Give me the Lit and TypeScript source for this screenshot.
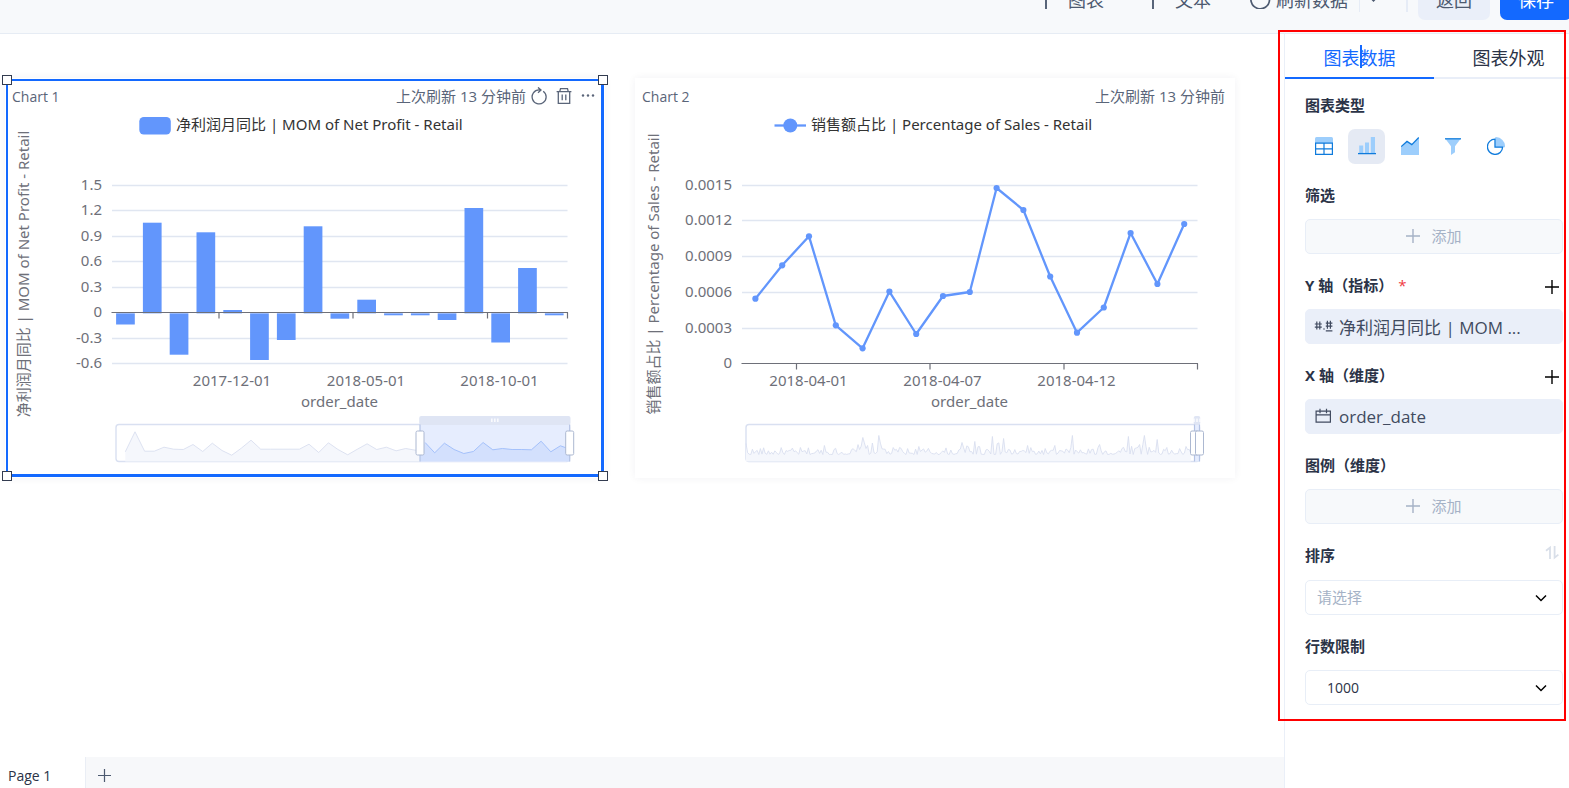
import { LitElement, html, svg, css } from "lit";
import { customElement, property } from "lit/decorators.js";

const BAND = 26.8;
const LEFT = 107;
const RIGHT = 562.5;
const SLIDER_BASE = 383.5;

interface ChartSpec {
  kind: "bar" | "line";
  title: string;
  legend: string;
  axisLabels: string[];
  gridTop: number;
  gridStep: number;
  zeroRow: number;
  ticks: number[];
  dates: [number, string][];
  /** y coordinate of each value's end on the plot */
  values: number[];
  window: [number, number];
  overview: [number, number][];
}

const overviewOne: [number, number][] = [
  9.7, 29.7, 10.3, 10.3, 14.3, 12.3, 12, 17, 10, 18.3, 11, 6.3, 13.3, 21.3, 12.3, 12.3, 12.3, 12.3, 12.3,
  17.3, 9, 18.7, 12, 6.7, 12.3, 17.7, 12, 14.3, 10.7, 13, 11.3, 19, 8.7, 18.3, 12, 8, 10, 19, 11.7, 13, 12,
  12, 11.7, 20.3, 9.7, 15.7, 13.7,
].map((h, i) => [Math.min(120.3 + i * 9.67, 561), h] as [number, number]);

function buildDailyOverview(): [number, number][] {
  const peaks: Record<number, number> = { 0: 18, 78: 16, 116: 24, 121: 16, 133: 26, 154: 14, 172: 15, 216: 19, 229: 20, 246: 25, 257: 23, 282: 16, 309: 16, 326: 26, 353: 17, 382: 25, 393: 17, 398: 26, 411: 22, 440: 15 };
  const keys = Object.keys(peaks).map(Number);
  const points: [number, number][] = [];
  let seed = 17;
  for (let x = 0; x <= 446; x += 1.6) {
    seed = (seed * 1103515245 + 12345) % 2147483648;
    const r = seed / 2147483648;
    const busy = x > 110 && x < 140 || x > 220 && x < 262 || x > 370 && x < 420 ? 1.7 : 1;
    let h = 7 + r * r * 7 * busy;
    const key = keys.find((k) => Math.abs(k - x) < 0.8);
    if (key !== undefined) h = peaks[key];
    points.push([111 + x, h]);
  }
  return points;
}

const CHARTS: ChartSpec[] = [
  {
    kind: "bar",
    title: "Chart 1",
    legend: "净利润月同比 | MOM of Net Profit - Retail",
    axisLabels: ["1.5", "1.2", "0.9", "0.6", "0.3", "0", "-0.3", "-0.6"],
    gridTop: 107.5,
    gridStep: 25.57,
    zeroRow: 5,
    ticks: [214, 348, 482.5, 562.5],
    dates: [[227, "2017-12-01"], [361, "2018-05-01"], [494.5, "2018-10-01"]],
    values: [246.5, 144.7, 276.7, 154.3, 232, 282, 262, 148.3, 240.7, 221.7, 237.3, 237.3, 242, 130, 264.5, 190, 237.3],
    window: [415, 564.7],
    overview: overviewOne,
  },
  {
    kind: "line",
    title: "Chart 2",
    legend: "销售额占比 | Percentage of Sales - Retail",
    axisLabels: ["0.0015", "0.0012", "0.0009", "0.0006", "0.0003", "0"],
    gridTop: 107.5,
    gridStep: 35.75,
    zeroRow: 5,
    ticks: [161.5, 295, 429, 562.5],
    dates: [[173.5, "2018-04-01"], [307.5, "2018-04-07"], [441.5, "2018-04-12"]],
    values: [220.7, 187.3, 158.3, 247.3, 270.3, 213.6, 256, 218, 214, 110, 132, 198.5, 254.7, 229.5, 155, 206, 146],
    window: [559.5, 564.5],
    overview: buildDailyOverview(),
  },
];

const plusIcon = (size: number, width = 1.4) => html`<svg width=${size} height=${size} viewBox="0 0 14 14" fill="none" stroke="currentColor" stroke-width=${width} aria-hidden="true"><path d="M7 0v14M0 7h14" /></svg>`;
const chevron = html`<svg class="chevron" width="12" height="12" viewBox="0 0 12 12" fill="none" stroke="currentColor" stroke-width="1.5" aria-hidden="true"><path d="M1 3.5l5 5 5-5" /></svg>`;

@customElement("chart-card")
class ChartCard extends LitElement {
  @property({ attribute: false }) spec!: ChartSpec;
  @property({ type: Boolean }) selected = false;

  static styles = css`
    :host {
      display: block;
      min-width: 0;
    }
    .card {
      position: relative;
      display: flex;
      flex-direction: column;
      background: #fff;
      box-shadow: 0 0 8px rgba(30, 40, 60, 0.06);
    }
    .head {
      box-sizing: border-box;
      display: flex;
      align-items: center;
      height: 38px;
      padding: 0 10px 2px 7px;
      color: #5a6579;
      gap: 5px;
    }
    .title {
      margin: 0 auto 0 0;
      font-size: 14px;
      font-weight: 400;
    }
    .time {
      font-size: 15px;
      line-height: 18px;
    }
    .tools {
      display: flex;
      gap: 9px;
    }
    .tools button {
      display: flex;
      padding: 0;
      border: 0;
      background: none;
      color: inherit;
      cursor: pointer;
    }
    .plot {
      display: block;
      width: 100%;
      height: auto;
      font-family: "Noto Sans", "Noto Sans CJK SC", sans-serif;
      font-size: 15px;
    }
    .axis {
      fill: #6e7079;
    }
    .legend {
      fill: #333;
    }
    .outline {
      position: absolute;
      inset: 1px;
      border: 2px solid #1369ff;
      border-right-width: 3px;
      border-bottom-width: 3px;
      pointer-events: none;
    }
    .grip {
      position: absolute;
      box-sizing: border-box;
      width: 10px;
      height: 10px;
      border: 1px solid #333c50;
      background: #fff;
    }
    .nw { left: -3px; top: -3px; }
    .ne { right: -3px; top: -3px; }
    .sw { left: -3px; bottom: -3px; }
    .se { right: -3px; bottom: -3px; }
  `;

  private renderSlider() {
    const { overview, window: [a, b] } = this.spec;
    const line = overview.map(([x, h]) => `${x.toFixed(1)},${(SLIDER_BASE - h).toFixed(1)}`).join(" ");
    const first = overview[0][0];
    const last = overview[overview.length - 1][0];
    const area = `${first},${SLIDER_BASE} ${line} ${last},${SLIDER_BASE}`;
    const inside = overview.filter(([x]) => x >= a);
    const chosen = inside.map(([x, h]) => `${x.toFixed(1)},${(SLIDER_BASE - h).toFixed(1)}`).join(" ");
    const mid = (a + b) / 2;
    return svg`
      <rect x="111" y="346.5" width="453.5" height="37" rx="3" fill="#fff" stroke="#d9e0f1" stroke-width="1.4" />
      <polygon points=${area} fill="#f5f7fc" />
      <polyline points=${line} fill="none" stroke="#d9dfef" stroke-width="0.9" />
      <rect x=${a} y="347" width=${b - a} height="36.5" fill="#e6edfe" />
      ${inside.length > 2 ? svg`
        <polygon points="${a},${SLIDER_BASE} ${a},371 ${chosen} ${b},371 ${b},${SLIDER_BASE}" fill="#d3e0fd" />
        <polyline points=${chosen} fill="none" stroke="#a4c1fb" />` : ""}
      <rect x=${a - 0.8} y="338" width=${b - a + 1.6} height="9" rx="2" fill="#dfe5f4" />
      <path d="M${mid - 3} 340.5v3.5M${mid} 340.5v3.5M${mid + 3} 340.5v3.5" stroke="#fff" stroke-width="1.3" />
      <path d="M${a} 346.5v37M${b} 346.5v37" stroke="#b4c3e4" stroke-width="1.2" />
      <rect x=${a - 4} y="353" width="8" height="24" rx="1.5" fill="#fff" stroke="#acb8d1" />
      <rect x=${b - 4} y="353" width="8" height="24" rx="1.5" fill="#fff" stroke="#acb8d1" />
    `;
  }

  private renderSeries(zero: number) {
    const s = this.spec;
    const center = (i: number) => LEFT + BAND * (i + 0.5);
    if (s.kind === "bar") {
      return s.values.map((y, i) => svg`<rect x=${center(i) - 9.3} y=${Math.min(y, zero)} width="18.7" height=${Math.abs(y - zero)} fill="#6296fc" />`);
    }
    return svg`
      <polyline points=${s.values.map((y, i) => `${center(i)},${y}`).join(" ")} fill="none" stroke="#6296fc" stroke-width="2.3" stroke-linejoin="bevel" />
      ${s.values.map((y, i) => svg`<circle cx=${center(i)} cy=${y} r="3.1" fill="#6296fc" />`)}
    `;
  }

  render() {
    const s = this.spec;
    const zero = s.gridTop + s.gridStep * s.zeroRow;
    const axisY = Math.round(zero) - 0.5;
    return html`
      <article class="card">
        <header class="head">
          <h2 class="title">${s.title}</h2>
          <span class="time">上次刷新 13 分钟前</span>
          ${this.selected ? html`
            <div class="tools">
              <button type="button" aria-label="刷新"><svg width="16" height="18" viewBox="0 0 16 18" fill="none" stroke="currentColor" stroke-width="1.3"><path d="M12.2 4.2A7 7 0 1 1 8 2.9h1.8M7 .4l3 2.6-3 2.7" /></svg></button>
              <button type="button" aria-label="删除"><svg width="16" height="18" viewBox="0 0 16 18" fill="none" stroke="currentColor" stroke-width="1.3"><path d="M.6 4.6h14.8M3.8 4.4L4.5 1.6h7l.7 2.8M2.3 4.8v11.5h11.4V4.8M6.2 7.6v5.6M9.8 7.6v5.6" /></svg></button>
              <button type="button" aria-label="更多"><svg width="14" height="18" viewBox="0 0 14 18" fill="currentColor"><circle cx="2" cy="8.5" r="1.2" /><circle cx="7" cy="8.5" r="1.2" /><circle cx="12" cy="8.5" r="1.2" /></svg></button>
            </div>` : ""}
        </header>
        <svg class="plot" viewBox="0 38 600 362" role="img" aria-label=${s.legend}>
          ${s.kind === "bar"
            ? svg`<rect x="134.3" y="39" width="31.5" height="17.5" rx="4.5" fill="#6296fc" /><text class="legend" x="171" y="52">${s.legend}</text>`
            : svg`<path d="M139.5 47.5h31.5" stroke="#6296fc" stroke-width="2.3" /><circle cx="155.3" cy="47.5" r="7" fill="#6296fc" /><text class="legend" x="176" y="52">${s.legend}</text>`}
          <text class="axis" transform="translate(24 196) rotate(-90)" text-anchor="middle">${s.legend}</text>
          ${s.axisLabels.map((label, i) => {
            const y = Math.round(s.gridTop + s.gridStep * i) - 0.5;
            return svg`
              ${i === s.zeroRow ? "" : svg`<path d="M${LEFT} ${y}H${RIGHT}" stroke="#e0e6f1" stroke-width="1.3" />`}
              <text class="axis" x="97" y=${y + 4} text-anchor="end">${label}</text>`;
          })}
          ${this.renderSeries(zero)}
          <path d="M${LEFT - 0.5} ${axisY}H${RIGHT + 0.5}${s.ticks.map((t) => `M${t} ${axisY}v6`).join("")}" fill="none" stroke="#6e7079" stroke-width="1.2" />
          ${s.dates.map(([x, label]) => svg`<text class="axis" x=${x} y="307.5" text-anchor="middle">${label}</text>`)}
          <text class="axis" x="334.5" y="329" text-anchor="middle">order_date</text>
          ${this.renderSlider()}
        </svg>
        ${this.selected ? html`<div class="outline"></div><i class="grip nw"></i><i class="grip ne"></i><i class="grip sw"></i><i class="grip se"></i>` : ""}
      </article>
    `;
  }
}

@customElement("settings-panel")
class SettingsPanel extends LitElement {
  static styles = css`
    :host {
      position: relative;
      display: block;
      box-sizing: border-box;
      border-left: 1px solid #eaeff8;
      background: #fff;
    }
    button {
      font: inherit;
      cursor: pointer;
    }
    .tabs {
      display: flex;
      overflow: hidden;
      height: 45px;
    }
    .tab {
      flex: 0 0 149px;
      padding: 2px 0 0;
      border: 0;
      border-bottom: 2px solid #e9eef8;
      background: none;
      color: #2b3347;
      font-size: 18px;
    }
    .tab.active {
      border-color: #1369ff;
      color: #1369ff;
    }
    .caret {
      position: absolute;
      left: 75px;
      top: 11px;
      width: 2px;
      height: 23px;
      background: #1369ff;
    }
    .body {
      display: flex;
      flex-direction: column;
      gap: 21px;
      padding: 16px 6px 16px 20px;
    }
    .group {
      display: flex;
      flex-direction: column;
      gap: 10px;
    }
    .label {
      display: flex;
      align-items: flex-start;
      justify-content: space-between;
      height: 24px;
      margin: 0;
      padding-right: 4px;
      color: #2b3347;
      font-size: 15px;
      font-weight: 700;
      line-height: 21px;
    }
    .label.sort {
      height: 25px;
    }
    .required {
      margin-left: 5px;
      color: #f0393f;
      font-weight: 400;
    }
    .icon-button {
      display: flex;
      align-self: center;
      padding: 0;
      border: 0;
      background: none;
      color: #000;
    }
    .icon-button.faint {
      align-self: flex-start;
      color: #d9dfe9;
    }
    .types {
      display: flex;
      gap: 6px;
    }
    .type {
      display: flex;
      align-items: center;
      justify-content: center;
      width: 37px;
      height: 35px;
      padding: 0 0 2px;
      border: 0;
      border-radius: 7px;
      background: none;
    }
    .type.active {
      background: #e5eaf4;
    }
    .field {
      box-sizing: border-box;
      display: flex;
      align-items: center;
      width: 100%;
      height: 35px;
      border: 1px solid #e8eef7;
      border-radius: 5px;
    }
    .add {
      justify-content: center;
      gap: 11px;
      padding: 0 0 2px;
      background: #f7f9fb;
      color: #a5b2c6;
      font-size: 15px;
    }
    .chip {
      gap: 6px;
      padding: 0 8px;
      border-color: #eaeff9;
      background: #eaeff9;
      color: #414b60;
      font-size: 17px;
      white-space: nowrap;
    }
    .select {
      display: grid;
      align-items: center;
    }
    .select > * {
      grid-area: 1 / 1;
    }
    select {
      appearance: none;
      padding: 0 32px 2px 11px;
      border-radius: 7px;
      background: #fff;
      color: #2b3347;
      font: inherit;
      font-size: 15px;
    }
    select.empty {
      color: #a5b2c6;
    }
    select.number {
      padding: 0 32px 0 21px;
      font-size: 14px;
    }
    .chevron {
      justify-self: end;
      margin-right: 16px;
      pointer-events: none;
    }
    .marker {
      position: absolute;
      inset: -4px 3px auto -7px;
      height: 687px;
      border: 2px solid #f00;
      pointer-events: none;
    }
  `;

  render() {
    const addButton = html`<button type="button" class="field add">${plusIcon(14, 1.4)}<span>添加</span></button>`;
    return html`
      <div class="tabs" role="tablist">
        <button type="button" class="tab active" role="tab" aria-selected="true">图表数据</button>
        <button type="button" class="tab" role="tab" aria-selected="false">图表外观</button>
      </div>
      <span class="caret"></span>
      <div class="body">
        <section class="group">
          <h3 class="label">图表类型</h3>
          <div class="types">
            <button type="button" class="type" aria-label="表格"><svg width="18" height="18" viewBox="0 0 18 18"><path d="M0 1.5Q0 0 1.5 0h15Q18 0 18 1.5V6H0z" fill="#9dcefc" /><path d="M.6 6.2h16.8v11.2H.6zM.6 11.8h16.8M9 6v11.5" fill="none" stroke="#0f7bdc" stroke-width="1.2" /></svg></button>
            <button type="button" class="type active" aria-label="柱状图"><svg width="18" height="18" viewBox="0 0 18 18"><path d="M1.2 8.4h4V16h-4zM7 5.4h4V16H7zM12.8 0h4.2v16h-4.2z" fill="#9dcefc" /><path d="M0 16.6h18" stroke="#0f7bdc" stroke-width="1.3" /></svg></button>
            <button type="button" class="type" aria-label="面积图"><svg width="18" height="18" viewBox="0 0 18 18"><path d="M0 10l6-5.2 4.8 3L18 .8V18H0z" fill="#9dcefc" /><path d="M.2 9.6L6 4.4l4.8 3.2L17.8.5" fill="none" stroke="#0f7bdc" stroke-width="1.3" /></svg></button>
            <button type="button" class="type" aria-label="漏斗图"><svg width="18" height="18" viewBox="0 0 18 18"><path d="M1.5 2h15L11 9.3v6L7 18V9.3z" fill="#9dcefc" /><path d="M1 1.8h16" stroke="#0f7bdc" stroke-width="1.3" /></svg></button>
            <button type="button" class="type" aria-label="饼图"><svg width="18" height="18" viewBox="0 0 18 18"><path d="M8.3 0a9.4 9.4 0 0 1 9.7 10.2H8.3z" fill="#9dcefc" /><path d="M8 2.2A7.6 7.6 0 1 0 15.6 10.2H8z" fill="none" stroke="#0f7bdc" stroke-width="1.3" /></svg></button>
          </div>
        </section>
        <section class="group">
          <h3 class="label">筛选</h3>
          ${addButton}
        </section>
        <section class="group">
          <h3 class="label"><span>Y 轴（指标）<span class="required">*</span></span><button type="button" class="icon-button" aria-label="添加指标">${plusIcon(14)}</button></h3>
          <div class="field chip">
            <svg width="19" height="14" viewBox="0 0 19 14" fill="none" stroke="#414b60" stroke-width="1.2" aria-hidden="true"><path d="M2.8 1.5v8M5.8 1.5v8M.8 4h7M.8 7.2h7M9.2 9h1.6M13.4.8v8M16.4.8v8M11.8 3.2h6.6M11.8 6.2h6.6M11.8 10.8h6.6" /></svg>
            <span>净利润月同比 | MOM ...</span>
          </div>
        </section>
        <section class="group">
          <h3 class="label"><span>X 轴（维度）</span><button type="button" class="icon-button" aria-label="添加维度">${plusIcon(14)}</button></h3>
          <div class="field chip">
            <svg width="19" height="20" viewBox="0 0 19 20" fill="none" stroke="#414b60" stroke-width="1.2" aria-hidden="true"><path d="M2.1 4.1h14.3v11H2.1zM2 7.8h14.5M6 1.8v4.4M12.5 1.8v4.4" /></svg>
            <span>order_date</span>
          </div>
        </section>
        <section class="group">
          <h3 class="label">图例（维度）</h3>
          ${addButton}
        </section>
        <section class="group">
          <div class="label sort">
            <label for="sort">排序</label>
            <button type="button" class="icon-button faint" aria-label="切换排序"><svg width="14" height="18" viewBox="0 0 14 18" fill="none" stroke="currentColor" stroke-width="1.8"><path d="M5 14V2.6L1 5.8M9.6 1v11.6L13.4 9.6" /></svg></button>
          </div>
          <div class="select">
            <select id="sort" class="field empty"><option>请选择</option></select>
            ${chevron}
          </div>
        </section>
        <section class="group">
          <label class="label" for="limit">行数限制</label>
          <div class="select">
            <select id="limit" class="field number"><option>1000</option></select>
            ${chevron}
          </div>
        </section>
      </div>
      <div class="marker"></div>
    `;
  }
}

@customElement("app-root")
class AppRoot extends LitElement {
  static styles = css`
    :host {
      display: flex;
      flex-direction: column;
      height: 100vh;
      overflow: hidden;
      background: #fff;
      font-family: "Open Sans", "Noto Sans CJK SC", sans-serif;
    }
    button {
      font: inherit;
      cursor: pointer;
    }
    .toolbar {
      box-sizing: border-box;
      display: flex;
      flex: none;
      align-items: flex-end;
      justify-content: flex-end;
      overflow: hidden;
      height: 34px;
      padding-bottom: 13px;
      border-bottom: 1px solid #e6ecf4;
      background: #f7f9fb;
      color: #4d5a70;
      font-size: 18px;
      white-space: nowrap;
    }
    .action {
      box-sizing: border-box;
      display: flex;
      align-items: center;
      gap: 12px;
      height: 40px;
      margin-right: 39px;
      padding: 0 0 3px;
      border: 0;
      background: none;
      color: inherit;
    }
    .action.refresh {
      gap: 5px;
      margin-right: 11px;
    }
    .action.more {
      margin-right: 25px;
    }
    .rule {
      width: 1px;
      height: 24px;
      margin: 0 6px 8px 0;
      background: #e6ecf6;
    }
    .rule.wide {
      width: 2px;
      margin-right: 10px;
    }
    .button {
      box-sizing: border-box;
      flex: none;
      width: 72px;
      height: 40px;
      margin-right: 10px;
      padding: 0 0 3px;
      border: 0;
      border-radius: 7px;
      background: #eaeff9;
      color: inherit;
    }
    .button.primary {
      margin-right: -3px;
      background: #1369ff;
      color: #fff;
    }
    .main {
      display: flex;
      flex: 1;
      min-height: 0;
    }
    .workspace {
      display: flex;
      flex: 1;
      flex-direction: column;
      min-width: 0;
    }
    .board {
      display: grid;
      flex: 1;
      grid-template-columns: 1fr 1fr;
      align-content: start;
      gap: 30px;
      min-height: 0;
      padding: 44px 49px 0 5px;
    }
    .pages {
      display: flex;
      flex: none;
      height: 31px;
      background: #f7f8fa;
      color: #2b3347;
    }
    .page,
    .new-page {
      box-sizing: border-box;
      padding: 5px 0 0 8px;
      border: 0;
      background: #fff;
      color: inherit;
      font-size: 14px;
      text-align: left;
    }
    .page {
      width: 86px;
      border-right: 1px solid #eaeef5;
    }
    .new-page {
      display: flex;
      align-items: center;
      padding: 5px 12px 0;
      background: none;
      color: #4d5a70;
    }
    .panel {
      flex: 0 0 285px;
      min-width: 0;
    }
  `;

  render() {
    return html`
      <header class="toolbar">
        <button type="button" class="action">${plusIcon(20, 1.3)}<span>图表</span></button>
        <button type="button" class="action">${plusIcon(20, 1.3)}<span>文本</span></button>
        <button type="button" class="action refresh"><svg width="21" height="21" viewBox="0 0 21 21" fill="none" stroke="currentColor" stroke-width="1.7" aria-hidden="true"><path d="M16 4.2A9.3 9.3 0 1 1 10.5 2.2" /></svg><span>刷新数据</span></button>
        <span class="rule"></span>
        <button type="button" class="action more" aria-label="更多刷新选项"><svg width="15" height="12" viewBox="0 0 15 12" fill="none" stroke="currentColor" stroke-width="2" aria-hidden="true"><path d="M3.5 3.5l4 4 4-4" /></svg></button>
        <span class="rule wide"></span>
        <button type="button" class="button">返回</button>
        <button type="button" class="button primary">保存</button>
      </header>
      <div class="main">
        <div class="workspace">
          <main class="board">
            ${CHARTS.map((spec, i) => html`<chart-card .spec=${spec} ?selected=${i === 0}></chart-card>`)}
          </main>
          <nav class="pages">
            <button type="button" class="page">Page 1</button>
            <button type="button" class="new-page" aria-label="新建页面">${plusIcon(13, 1.3)}</button>
          </nav>
        </div>
        <settings-panel class="panel"></settings-panel>
      </div>
    `;
  }
}
